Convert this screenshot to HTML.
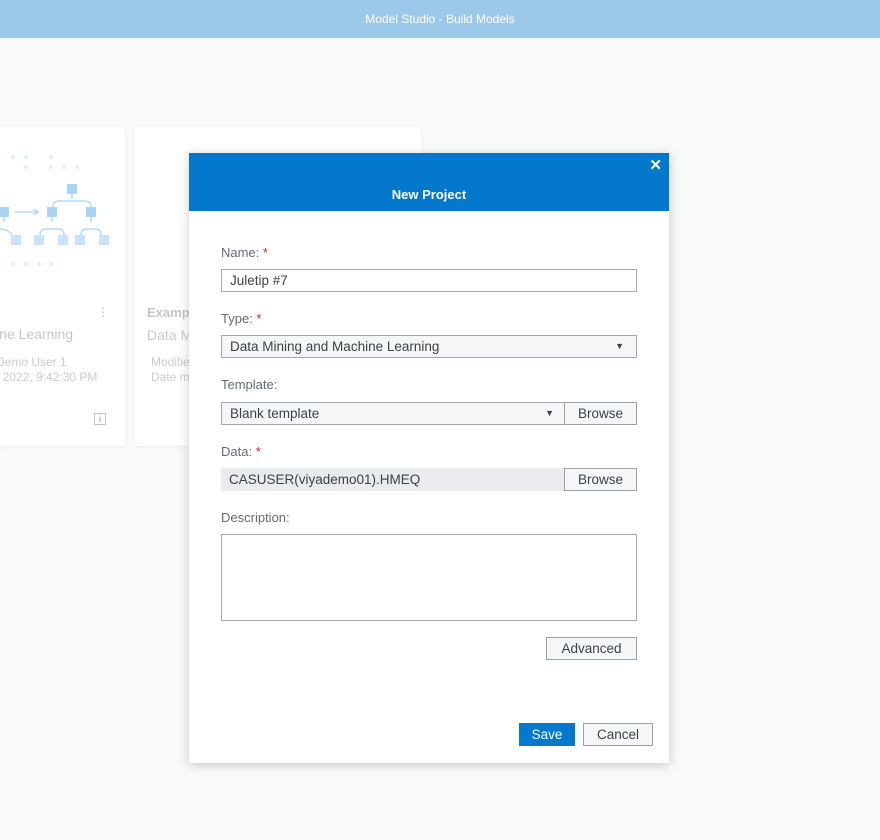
<!DOCTYPE html>
<html><head><style>
body{margin:0;width:880px;height:840px;background:#f8f9f9;font-family:"Liberation Sans",sans-serif;position:relative;overflow:hidden}
.top{position:absolute;left:0;top:0;width:880px;height:38px;background:#9cc9ea;color:#fff;font-size:12px;text-align:center;line-height:38px}
.card{position:absolute;background:#fff;box-shadow:0 1px 3px rgba(0,0,0,.06)}
.a{position:absolute;white-space:nowrap}
.dlg{position:absolute;left:189px;top:153px;width:480px;height:610px;background:#fff;box-shadow:0 2px 10px rgba(0,0,0,.2)}
.hd{height:58px;background:#0478cc;color:#fff;font-weight:bold;font-size:13px;text-align:center;line-height:84px;position:relative}
.lbl{position:absolute;left:32px;font-size:13px;color:#656b73}
.lbl b{color:#d22;font-weight:normal}
.in{position:absolute;left:32px;width:416px;height:23px;border:1px solid #a3a9b2;box-sizing:border-box;font-size:13.5px;color:#3d4249;line-height:21px;padding-left:8px;background:#fff}
.btn{position:absolute;height:23px;border:1px solid #9ba1aa;box-sizing:border-box;background:#f5f6f8;font-size:13.5px;color:#3d4249;text-align:center;line-height:21px}
</style></head><body>
<div class="top">Model Studio - Build Models</div>
<div class="card" style="left:0;top:127px;width:125px;height:319px">
<svg width="125" height="130" style="position:absolute;left:0;top:10px">
<g fill="#dfeefb"><circle cx="13" cy="20" r="2"/><circle cx="26" cy="20" r="2"/><circle cx="51" cy="20" r="2"/><circle cx="26" cy="30" r="2"/><circle cx="51" cy="30" r="2"/><circle cx="64" cy="30" r="2"/><circle cx="77" cy="30" r="2"/><circle cx="13" cy="127" r="2"/><circle cx="26" cy="127" r="2"/><circle cx="39" cy="127" r="2"/><circle cx="51" cy="127" r="2"/></g>
<g fill="#a9d4f8"><rect x="67" y="47" width="10" height="10" rx="1"/><rect x="0" y="70" width="9" height="10"/><rect x="47" y="70" width="10" height="10"/><rect x="86" y="70" width="10" height="10"/></g>
<g fill="#c8e3fb"><rect x="11" y="98" width="10" height="10"/><rect x="34" y="98" width="10" height="10"/><rect x="58" y="98" width="10" height="10"/><rect x="75" y="98" width="10" height="10"/><rect x="99" y="98" width="10" height="10"/></g>
<g stroke="#a9d4f8" fill="none" stroke-width="1.3"><path d="M15 75h23M34 72l4 3-4 3M72 57v5M53 70q0-6 6-6h26q6 0 6 6M52 80v5M40 98q0-6 6-6h12q6 0 6 6M91 80v5M81 98q0-6 6-6h8q6 0 6 6M4 80v5M0 92q8 0 12 6"/></g>
</svg>
<div class="a" style="left:97px;top:178px;color:#bbb;font-size:12px">⋮</div>
<div class="a" style="left:-4px;top:199px;font-size:14px;color:#c2c6cb">ine Learning</div>
<div class="a" style="left:-4px;top:228px;font-size:12px;color:#c8cbd0;line-height:15px">Demo User 1<br>, 2022, 9:42:30 PM</div>
<div class="a" style="left:94px;top:286px;width:12px;height:12px;border:1px solid #d6b8cc;box-sizing:border-box;font-size:9px;color:#a88;text-align:center;line-height:11px">i</div>
</div>
<div class="card" style="left:135px;top:127px;width:286px;height:319px">
<div class="a" style="left:12px;top:178px;font-size:13px;font-weight:bold;color:#c3c5c8">Examp</div>
<div class="a" style="left:12px;top:200px;font-size:14px;color:#c8cbd0">Data M</div>
<div class="a" style="left:16px;top:228px;font-size:12px;color:#c8cbd0;line-height:15px">Modifie<br>Date m</div>
</div>
<div class="dlg">
<div class="hd">New Project<span style="position:absolute;right:7px;top:-29px;font-size:15px">✕</span></div>
<div class="lbl" style="top:92px">Name: <b>*</b></div>
<div class="in" style="top:116px">Juletip #7</div>
<div class="lbl" style="top:158px">Type: <b>*</b></div>
<div class="in" style="top:182px;background:#f5f6f8">Data Mining and Machine Learning<span style="position:absolute;right:12px;font-size:9px">▼</span></div>
<div class="lbl" style="top:224px">Template:</div>
<div class="in" style="top:249px;width:344px;background:#f5f6f8">Blank template<span style="position:absolute;right:10px;font-size:9px">▼</span></div>
<div class="btn" style="left:375px;top:249px;width:73px">Browse</div>
<div class="lbl" style="top:291px">Data: <b>*</b></div>
<div class="in" style="top:315px;width:344px;background:#e9ebee;border:none;line-height:23px">CASUSER(viyademo01).HMEQ</div>
<div class="btn" style="left:375px;top:315px;width:73px">Browse</div>
<div class="lbl" style="top:357px">Description:</div>
<div class="in" style="top:381px;height:87px"></div>
<div class="btn" style="left:357px;top:484px;width:91px">Advanced</div>
<div class="btn" style="left:330px;top:570px;width:56px;background:#0478cc;border-color:#0478cc;color:#fff">Save</div>
<div class="btn" style="left:394px;top:570px;width:70px">Cancel</div>
</div>
</body></html>
